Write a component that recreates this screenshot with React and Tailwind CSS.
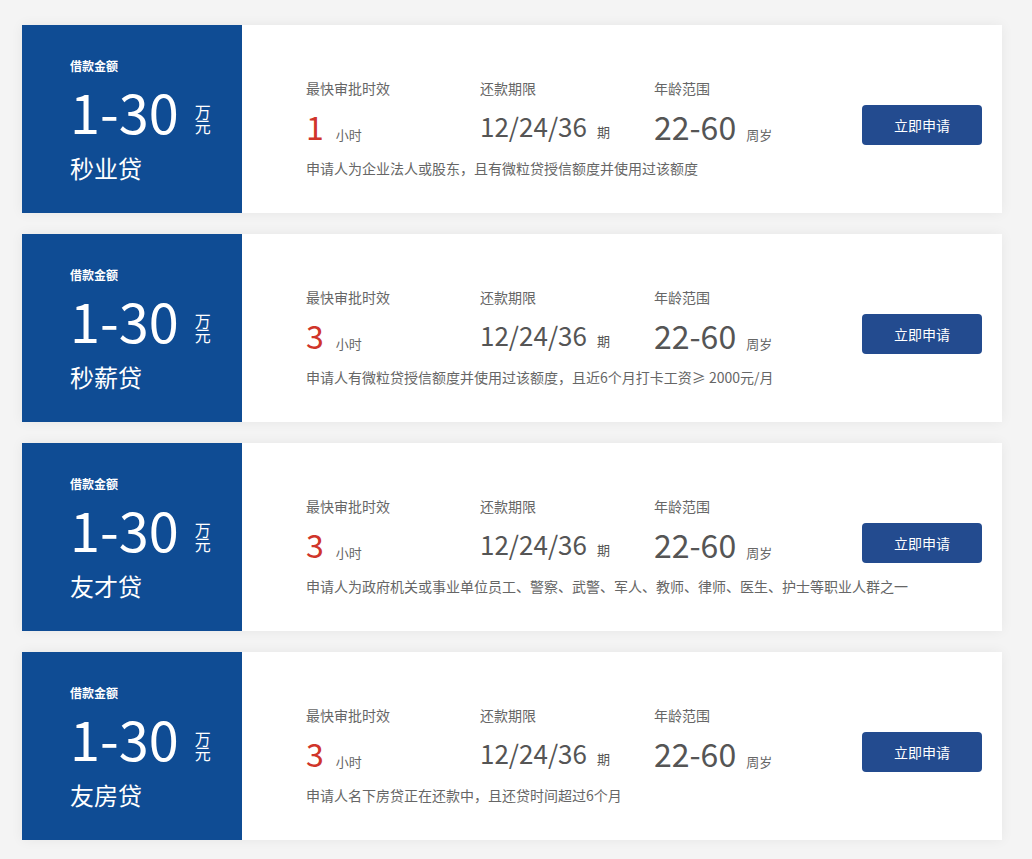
import React from "react";

const items = [
  { name: "秒业贷", hours: "1", desc: "申请人为企业法人或股东，且有微粒贷授信额度并使用过该额度" },
  { name: "秒薪贷", hours: "3", desc: "申请人有微粒贷授信额度并使用过该额度，且近6个月打卡工资≥ 2000元/月" },
  { name: "友才贷", hours: "3", desc: "申请人为政府机关或事业单位员工、警察、武警、军人、教师、律师、医生、护士等职业人群之一" },
  { name: "友房贷", hours: "3", desc: "申请人名下房贷正在还款中，且还贷时间超过6个月" },
];

const font = { fontFamily: '"Noto Sans CJK SC", "Microsoft YaHei", sans-serif' };

function Card({ item }) {
  return (
    <div className="flex h-[188px] w-[980px] bg-white shadow-[0_0_12px_rgba(0,0,0,0.06)]">
      <div className="flex w-[220px] shrink-0 flex-col bg-[#0f4c94] pl-[48px] pt-[33px] text-white">
        <div className="text-[12px] font-bold leading-[16px]">借款金额</div>
        <div className="mt-[10px] flex items-center">
          <span className="text-[54px] leading-[54px]">1-30</span>
          <span className="ml-[16px] mt-[16px] flex flex-col text-[16px] leading-[15px]">
            <span>万</span>
            <span>元</span>
          </span>
        </div>
        <div className="mt-[15px] text-[24px] leading-[30px]">{item.name}</div>
      </div>
      <div className="flex min-w-0 flex-1 items-start">
        <div className="flex flex-col pl-[64px] pt-[53px]">
          <div className="flex">
            <div className="w-[174px]">
              <div className="text-[14px] leading-[20px] text-[#666]">最快审批时效</div>
              <div className="mt-[10px] flex items-baseline">
                <span className="text-[32px] leading-[36px] text-[#d0352a]">{item.hours}</span>
                <span className="ml-[12px] text-[13px] text-[#666]">小时</span>
              </div>
            </div>
            <div className="w-[174px]">
              <div className="text-[14px] leading-[20px] text-[#666]">还款期限</div>
              <div className="mt-[10px] flex items-baseline">
                <span className="text-[26px] leading-[36px] text-[#555]">12/24/36</span>
                <span className="ml-[10px] text-[13px] text-[#555]">期</span>
              </div>
            </div>
            <div className="w-[174px]">
              <div className="text-[14px] leading-[20px] text-[#666]">年龄范围</div>
              <div className="mt-[10px] flex items-baseline">
                <span className="text-[32px] leading-[36px] text-[#555]">22-60</span>
                <span className="ml-[10px] text-[13px] text-[#666]">周岁</span>
              </div>
            </div>
          </div>
          <div className="mt-[13px] w-[522px] overflow-visible whitespace-nowrap text-[14px] leading-[20px] text-[#666]">{item.desc}</div>
        </div>
        <div className="ml-auto mr-[20px] mt-[80px] flex h-[40px] w-[120px] shrink-0 items-center justify-center rounded-[4px] bg-[#234b8f] text-[14px] text-white">
          立即申请
        </div>
      </div>
    </div>
  );
}

export default function App() {
  return (
    <div className="min-h-[859px] w-[1032px] bg-[#f4f4f4] pl-[22px] pt-[25px]" style={font}>
      <div className="flex flex-col gap-[21px]">
        {items.map((it) => (
          <Card key={it.name} item={it} />
        ))}
      </div>
    </div>
  );
}
